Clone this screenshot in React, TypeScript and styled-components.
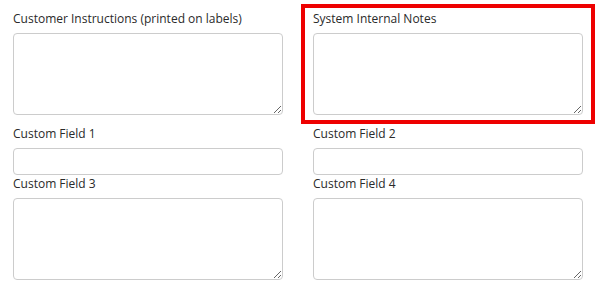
import React from "react";
import styled, { createGlobalStyle } from "styled-components";

const Global = createGlobalStyle`
  html, body { margin: 0; padding: 0; background: #ffffff; }
  body { font-family: "Open Sans", "Liberation Sans", sans-serif; }
`;

const Form = styled.div`
  display: grid;
  grid-template-columns: 270px 270px;
  column-gap: 30px;
  padding: 10px 0 0 13px;
`;

const Field = styled.div<{ $highlight?: boolean; $spaceAfter?: number }>`
  position: relative;
  display: flex;
  flex-direction: column;
  margin-bottom: ${(p) => p.$spaceAfter ?? 0}px;
  ${(p) =>
    p.$highlight &&
    `
    &::before {
      content: "";
      position: absolute;
      top: -6px;
      left: -12px;
      right: -12px;
      bottom: -9px;
      border: 4px solid #ee0000;
      pointer-events: none;
    }
  `}
`;

const Label = styled.label`
  display: block;
  font-size: 12px;
  line-height: 18px;
  color: #2a2a2a;
  margin-bottom: 5px;
`;

const TextArea = styled.textarea`
  box-sizing: border-box;
  display: block;
  width: 270px;
  height: 82px;
  margin: 0;
  padding: 6px 8px;
  border: 1px solid #cccccc;
  border-radius: 4px;
  background: #ffffff;
  font-family: inherit;
  font-size: 12px;
  resize: vertical;
`;

const Input = styled.input`
  box-sizing: border-box;
  display: block;
  width: 270px;
  height: 27px;
  margin: 0;
  padding: 4px 8px;
  border: 1px solid #cccccc;
  border-radius: 4px;
  background: #ffffff;
  font-family: inherit;
  font-size: 12px;
`;

export default function App() {
  return (
    <>
      <Global />
      <Form>
        <Field $spaceAfter={10}>
          <Label>Customer Instructions (printed on labels)</Label>
          <TextArea />
        </Field>
        <Field $highlight $spaceAfter={10}>
          <Label>System Internal Notes</Label>
          <TextArea />
        </Field>
        <Field>
          <Label>Custom Field 1</Label>
          <Input type="text" />
        </Field>
        <Field>
          <Label>Custom Field 2</Label>
          <Input type="text" />
        </Field>
        <Field>
          <Label>Custom Field 3</Label>
          <TextArea />
        </Field>
        <Field>
          <Label>Custom Field 4</Label>
          <TextArea />
        </Field>
      </Form>
    </>
  );
}
